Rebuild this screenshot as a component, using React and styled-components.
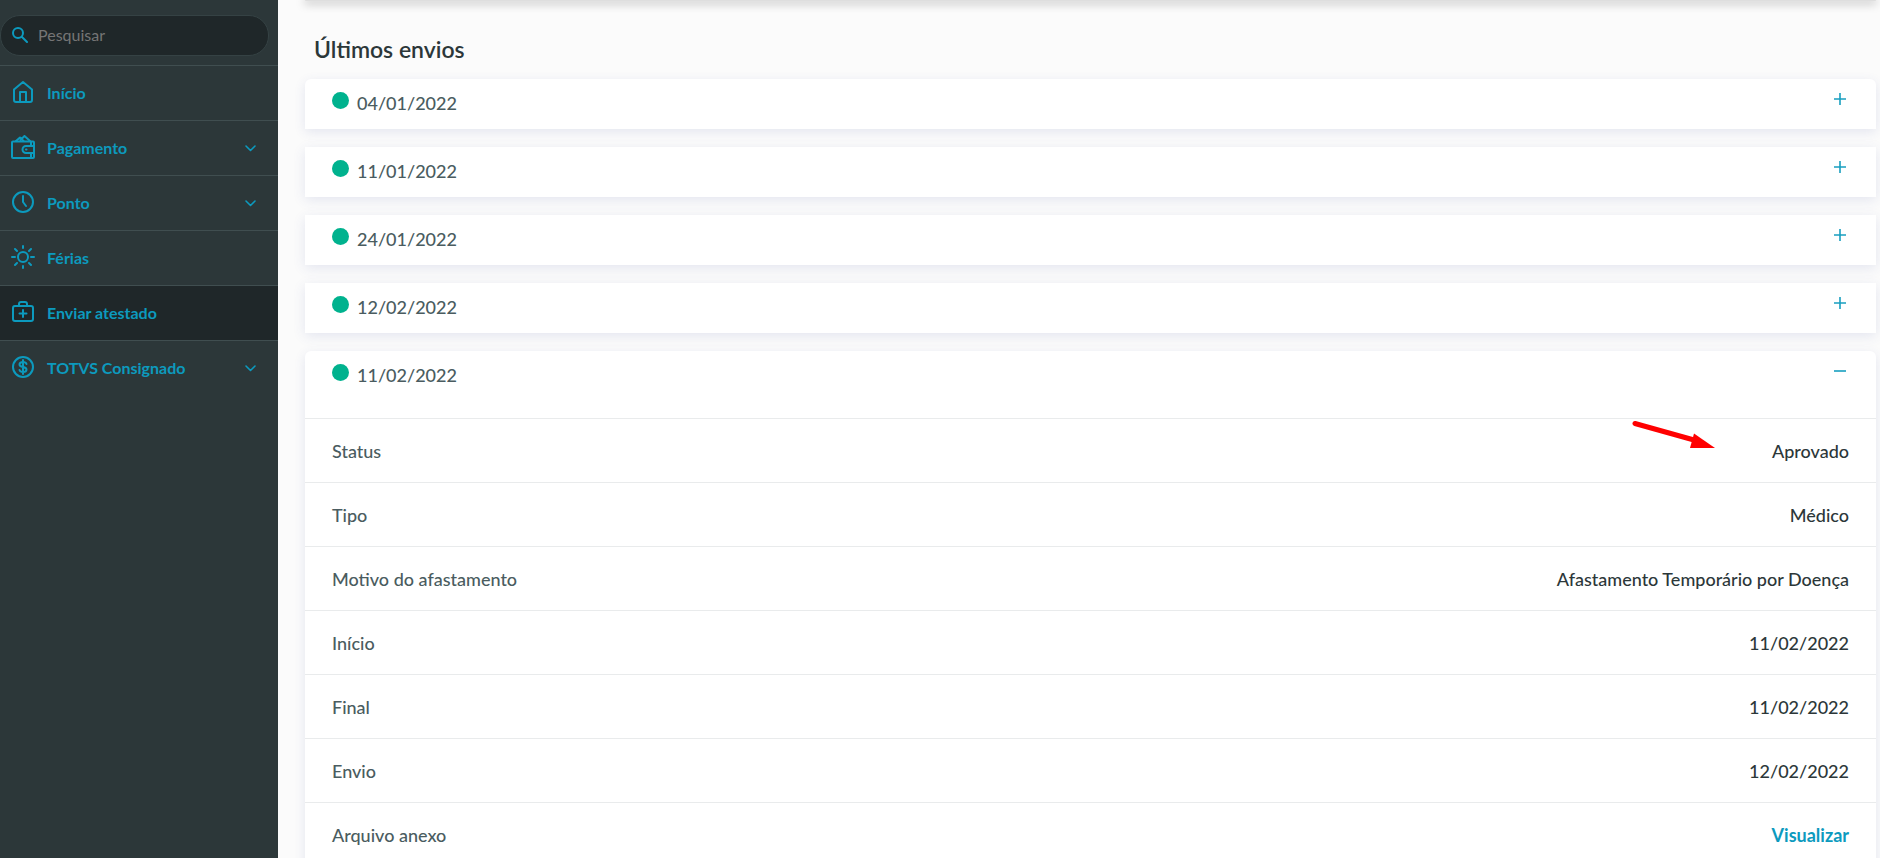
import React, { useState } from "react";
import styled, { createGlobalStyle } from "styled-components";

const GlobalStyle = createGlobalStyle`
  * {
    box-sizing: border-box;
  }
  body {
    margin: 0;
    background: #fbfbfb;
    font-family: "Lato", "Noto Sans", sans-serif;
    color: #2c3739;
  }
`;

const Page = styled.div`
  display: flex;
  height: 100vh;
  overflow: hidden;
`;

const Sidebar = styled.aside`
  flex: none;
  width: 278px;
  padding-top: 15px;
  background: #2c3739;
`;

const Search = styled.label`
  display: flex;
  align-items: center;
  gap: 10px;
  height: 41px;
  margin: 0 9px 9px 0;
  padding: 0 12px 2px 11px;
  border: 1px solid #354244;
  border-radius: 20px;
  background: #1f2729;
  color: #0c9abe;
`;

const SearchInput = styled.input`
  flex: 1;
  min-width: 0;
  padding: 0;
  border: none;
  outline: none;
  background: none;
  color: #ffffff;
  font-family: inherit;
  font-size: 16px;

  &::placeholder {
    color: #757575;
    opacity: 1;
  }
`;

const MenuItem = styled.a`
  display: flex;
  align-items: center;
  gap: 12px;
  height: 55px;
  padding: 0 21px 2px 11px;
  border-top: 1px solid #404e50;
  background: ${({ $active }) => ($active ? "#1f2729" : "none")};
  color: #0c9abe;
  font-size: 16px;
  font-weight: 700;
  text-decoration: none;
`;

const MenuText = styled.span`
  flex: 1;
`;

const Icon = styled.svg`
  flex: none;
  fill: none;
  stroke: currentColor;
  stroke-width: 2;
  stroke-linecap: round;
  stroke-linejoin: round;
`;

const Main = styled.main`
  flex: 1;
  min-width: 0;
  padding: 0 4px 0 27px;
`;

const PreviousCard = styled.div`
  height: 1px;
  border-radius: 0 0 8px 8px;
  background: #dedede;
  box-shadow: 0 1px 10px 1px rgba(0, 0, 0, 0.4);
`;

const Title = styled.h1`
  margin: 0;
  padding: 34px 9px 16px;
  font-size: 23px;
  font-weight: 600;
  line-height: 28px;
`;

const List = styled.div`
  display: flex;
  flex-direction: column;
  gap: 18px;
`;

const Card = styled.section`
  border-radius: ${({ $rounded }) => ($rounded ? "6px 6px 0 0" : "0")};
  background: #ffffff;
  box-shadow: 0 3px 12px rgba(60, 70, 160, 0.12);
`;

const CardHeader = styled.button`
  display: flex;
  align-items: flex-start;
  gap: 8px;
  width: 100%;
  height: ${({ $open }) => ($open ? "67px" : "50px")};
  padding: 13px 28px 0 27px;
  border: none;
  background: none;
  color: #4a5c60;
  font-family: inherit;
  font-size: 18px;
  font-weight: 500;
  line-height: 22px;
  text-align: left;
  cursor: pointer;
`;

const Dot = styled.span`
  width: 17px;
  height: 17px;
  border-radius: 50%;
  background: #00b28e;
`;

const Day = styled.span`
  flex: 1;
`;

const Toggle = styled(Icon)`
  color: #189fc0;
  stroke-width: 1.6;
  stroke-linecap: butt;
`;

const Details = styled.dl`
  margin: 0;
`;

const Row = styled.div`
  position: relative;
  display: flex;
  align-items: center;
  justify-content: space-between;
  height: 64px;
  padding: 0 27px;
  border-top: 1px solid #e9ebec;
  font-size: 18px;
  font-weight: 500;
`;

const Term = styled.dt`
  color: #4a5c60;
`;

const Value = styled.dd`
  margin: 0;
`;

const View = styled.a`
  color: #0c9abe;
  font-weight: 700;
  text-decoration: none;
`;

const Arrow = styled.svg`
  position: absolute;
  top: 0;
  right: 160px;
`;

const icons = {
  home: (
    <Icon width="24" height="24" viewBox="0 0 24 24">
      <path d="M3 9.5 12 2l9 7.500V20a2 2 0 0 1-2 2H5a2 2 0 0 1-2-2zM9 22V12h6v10" />
    </Icon>
  ),
  wallet: (
    <Icon width="24" height="24" viewBox="0 0 24 24">
      <path d="M1 7.500a1 1 0 0 1 1-1h20a1 1 0 0 1 1 1V22a1 1 0 0 1-1 1H2a1 1 0 0 1-1-1z" />
      <path d="M5 6l4-3.500L12.500 6M9.500 5l4-4L19 6M20 7v4M20 18v5M22 11h-7a3.500 3.500 0 0 0 0 7h7M15 14.500h.5" />
    </Icon>
  ),
  clock: (
    <Icon width="24" height="24" viewBox="0 0 24 24">
      <circle cx="12" cy="12" r="10" />
      <path d="M12 6v6l3 4" />
    </Icon>
  ),
  sun: (
    <Icon width="24" height="24" viewBox="0 0 24 24">
      <circle cx="12" cy="12" r="5" />
      <path d="M12 1v2M12 21v2M1 12h3M20 12h3M4 4l2 2M18 18l2 2M4 20l2-2M18 6l2-2" />
    </Icon>
  ),
  medkit: (
    <Icon width="24" height="24" viewBox="0 0 24 24">
      <rect x="2" y="6" width="20" height="15" rx="2" />
      <path d="M8 6V4a2 2 0 0 1 2-2h4a2 2 0 0 1 2 2v2M12 10v7M8.500 13.500h7" />
    </Icon>
  ),
  coin: (
    <Icon width="24" height="24" viewBox="0 0 24 24">
      <circle cx="12" cy="12" r="10" />
      <path d="M15.500 9c-.5-1.500-2-2-3.500-2-2 0-3.500.9-3.500 2.500s1.500 2.100 3.500 2.500 3.500 1 3.500 2.500S14 17 12 17c-1.500 0-3-.6-3.500-2M12 5v14" />
    </Icon>
  ),
};

const menu = [
  { label: "Início", icon: "home" },
  { label: "Pagamento", icon: "wallet", children: true },
  { label: "Ponto", icon: "clock", children: true },
  { label: "Férias", icon: "sun" },
  { label: "Enviar atestado", icon: "medkit", active: true },
  { label: "TOTVS Consignado", icon: "coin", children: true },
];

const details = [
  ["Status", "Aprovado"],
  ["Tipo", "Médico"],
  ["Motivo do afastamento", "Afastamento Temporário por Doença"],
  ["Início", "11/02/2022"],
  ["Final", "11/02/2022"],
  ["Envio", "12/02/2022"],
];

const days = ["04/01/2022", "11/01/2022", "24/01/2022", "12/02/2022", "11/02/2022"];

const Submission = ({ day, rounded, open, onToggle }) => (
  <Card $rounded={rounded || open}>
    <CardHeader type="button" $open={open} aria-expanded={open} onClick={onToggle}>
      <Dot />
      <Day>{day}</Day>
      <Toggle width="16" height="16" viewBox="0 0 16 16">
        <path d={open ? "M2 7h12" : "M2 7h12M8 1v12"} />
      </Toggle>
    </CardHeader>
    {open && (
      <Details>
        {details.map(([term, value]) => (
          <Row key={term}>
            <Term>{term}</Term>
            <Value>{value}</Value>
            {term === "Status" && (
              <Arrow width="84" height="34" viewBox="0 0 84 34">
                <path d="M3 4.500 62 21" stroke="#ff0000" strokeWidth="5" strokeLinecap="round" />
                <path d="M62 14.500 83 29H58z" fill="#ff0000" />
              </Arrow>
            )}
          </Row>
        ))}
        <Row>
          <Term>Arquivo anexo</Term>
          <Value>
            <View href="#anexo">Visualizar</View>
          </Value>
        </Row>
      </Details>
    )}
  </Card>
);

const App = () => {
  const [openDay, setOpenDay] = useState("11/02/2022");

  return (
    <Page>
      <GlobalStyle />
      <Sidebar>
        <Search htmlFor="search">
          <Icon width="16" height="16" viewBox="0 0 16 16">
            <circle cx="6" cy="6" r="5" />
            <path d="m10 10 5 5" />
          </Icon>
          <SearchInput id="search" type="text" placeholder="Pesquisar" />
        </Search>
        <nav>
          {menu.map(({ label, icon, active, children }) => (
            <MenuItem key={label} href="#" $active={active}>
              {icons[icon]}
              <MenuText>{label}</MenuText>
              {children && (
                <Icon width="14" height="14" viewBox="0 0 14 14">
                  <path d="m3 6 4.500 4.500L12 6" strokeWidth="1.600" />
                </Icon>
              )}
            </MenuItem>
          ))}
        </nav>
      </Sidebar>
      <Main>
        <PreviousCard />
        <Title>Últimos envios</Title>
        <List>
          {days.map((day, index) => (
            <Submission
              key={day}
              day={day}
              rounded={index === 0}
              open={openDay === day}
              onToggle={() => setOpenDay(openDay === day ? null : day)}
            />
          ))}
        </List>
      </Main>
    </Page>
  );
};

export default App;
